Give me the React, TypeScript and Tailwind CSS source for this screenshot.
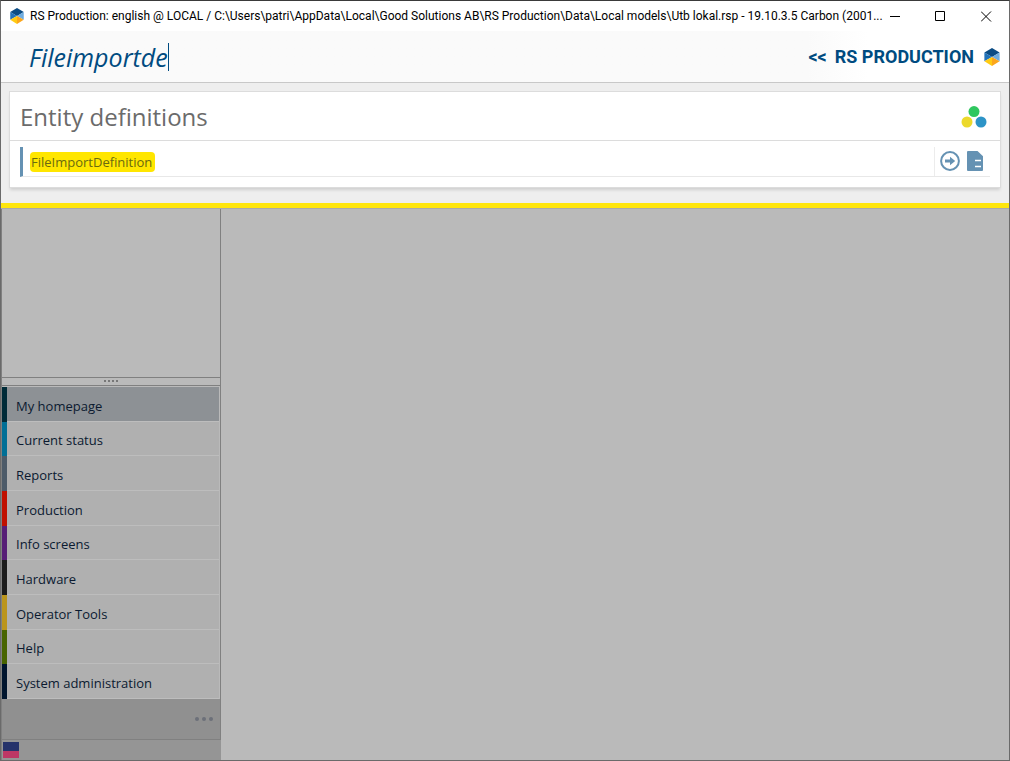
import React from "react";

type NavItem = { label: string; stripe: string; active?: boolean };

const navItems: NavItem[] = [
  { label: "My homepage", stripe: "bg-[#002b38]", active: true },
  { label: "Current status", stripe: "bg-[#006f96]" },
  { label: "Reports", stripe: "bg-[#4d5b69]" },
  { label: "Production", stripe: "bg-[#c01000]" },
  { label: "Info screens", stripe: "bg-[#571e76]" },
  { label: "Hardware", stripe: "bg-[#1b1b1b]" },
  { label: "Operator Tools", stripe: "bg-[#bb951c]" },
  { label: "Help", stripe: "bg-[#486400]" },
  { label: "System administration", stripe: "bg-[#00152e]" },
];

function CubeLogo({ className }: { className: string }) {
  return (
    <svg viewBox="0 0 16 18" className={className} aria-hidden="true">
      <path d="M8 0 15.6 4.5 8 9 .4 4.5Z" fill="#0b4c84" />
      <path d="M.4 4.5 8 9 .4 13.2Z" fill="#2272b9" />
      <path d="M15.6 4.5 8 9l7.6 4.2Z" fill="#6facde" />
      <path d="M.4 13.2 8 9v9Z" fill="#ffcb12" />
      <path d="M15.6 13.2 8 9v9Z" fill="#fba61c" />
    </svg>
  );
}

function TitleBar() {
  return (
    <header className="flex h-[30px] items-center bg-white pl-2">
      <CubeLogo className="h-4 w-4 shrink-0" />
      <h1 className="-mr-4 ml-[5px] min-w-0 flex-1 truncate font-['Roboto',sans-serif] text-[12px] leading-4 text-black">
        RS Production: english @ LOCAL / C:\Users\patri\AppData\Local\Good Solutions AB\RS
        Production\Data\Local models\Utb lokal.rsp - 19.10.3.5 Carbon (2001...
      </h1>
      <div className="flex h-full shrink-0">
        <button aria-label="Minimize" className="flex w-[45px] items-center justify-center">
          <svg viewBox="0 0 11 11" className="h-[11px] w-[11px]">
            <path d="M0 5.5h10" stroke="#000" />
          </svg>
        </button>
        <button aria-label="Maximize" className="flex w-[45px] items-center justify-center">
          <svg viewBox="0 0 11 11" className="h-[11px] w-[11px]">
            <path d="M.5.5h9v9h-9Z" stroke="#000" fill="none" />
          </svg>
        </button>
        <button aria-label="Close" className="flex w-[46px] items-center justify-center">
          <svg viewBox="0 0 11 11" className="h-[11px] w-[11px]">
            <path d="m0 .5 10 10m0-10-10 10" stroke="#000" />
          </svg>
        </button>
      </div>
    </header>
  );
}

function SearchBar() {
  return (
    <div className="flex h-[52px] items-center border-b border-[#c8c8c8] bg-linear-to-r from-[#fafafa] from-80% to-white to-86% pr-[9px] pl-7">
      <div className="flex min-w-0 flex-1 items-center">
        <input
          aria-label="Search"
          defaultValue="Fileimportde"
          className="field-sizing-content h-8 bg-transparent text-[25px] leading-8 text-[#004b80] italic outline-none"
        />
        <span className="h-7 w-px bg-[#004b80]" />
      </div>
      <a
        href="#"
        className="flex shrink-0 items-center pt-px font-['Roboto',sans-serif] text-[18px] leading-6 font-bold text-[#004b80]"
      >
        <span className="mr-2">&lt;&lt;</span>
        <span className="mr-[10px]">RS PRODUCTION</span>
        <CubeLogo className="h-[18px] w-4" />
      </a>
    </div>
  );
}

function ResultsCard() {
  return (
    <section className="border border-[#dcdcdc] bg-white shadow-[0_3px_3px_-1px_rgba(0,0,0,0.13)]">
      <div className="flex h-[49px] items-center justify-between border-b border-[#dcdcdc] pt-px pr-[13px] pl-[10px]">
        <h2 className="text-[24px] leading-8 text-[#6b6b6b]">Entity definitions</h2>
        <svg viewBox="0 0 26 22" className="h-[22px] w-[26px]" aria-hidden="true">
          <circle cx="13" cy="5.6" r="5.5" fill="#2fc75f" />
          <circle cx="6" cy="16" r="5.5" fill="#ecd92b" />
          <circle cx="20" cy="16" r="5.5" fill="#2d94c7" />
        </svg>
      </div>
      <div className="px-[10px] pt-[6px] pb-[10px]">
        <div className="flex h-[30px] items-center border-b border-l-3 border-b-[#e8e8e8] border-l-[#6592b3] pl-[7px]">
          <a
            href="#"
            className="rounded-[4px] bg-[#ffe600] pr-[3px] pl-px text-[13px] leading-5 text-[#6a6a10]"
          >
            FileImportDefinition
          </a>
          <div className="ml-auto flex h-full items-center gap-[7px] border-l border-[#ececec] pr-[7px] pb-px pl-[5px]">
            <button aria-label="Open">
              <svg viewBox="0 0 20 20" className="block h-5 w-5">
                <circle cx="10" cy="10" r="8.9" fill="none" stroke="#6592b3" strokeWidth="2" />
                <path d="M5 8.6h5V5.8l5.2 4.2-5.2 4.2v-2.8H5Z" fill="#6592b3" />
              </svg>
            </button>
            <button aria-label="Show document">
              <svg viewBox="0 0 16 20" className="block h-5 w-4">
                <path
                  d="M1 0h9.5L16 5.2V19a1 1 0 0 1-1 1H1a1 1 0 0 1-1-1V1a1 1 0 0 1 1-1Z"
                  fill="#6592b3"
                />
                <path d="M8 9.5h6M8 15.5h6" stroke="#fff" strokeWidth="1.3" />
              </svg>
            </button>
          </div>
        </div>
      </div>
    </section>
  );
}

function Sidebar() {
  return (
    <aside className="flex w-[220px] shrink-0 flex-col border-l border-[#808080] bg-[#bababa]">
      <div className="flex flex-1 flex-col border-r border-b border-[#808080]">
        <div className="flex-1" />
        <div className="flex h-[9px] items-center justify-center gap-[2px] border-y border-[#808080] pb-px">
          {[0, 1, 2, 3].map((i) => (
            <span key={i} className="h-[2px] w-[2px] bg-[#777]" />
          ))}
        </div>
        <nav className="grid h-[313px] grid-rows-9 pt-px pr-px">
          {navItems.map((item) => (
            <a
              key={item.label}
              href="#"
              className={`flex items-stretch text-[13px] text-[#0b1a30] ${
                item.active ? "bg-[#8d9195]" : "bg-[#b0b0b0]"
              }`}
            >
              <span className={`w-[5px] ${item.stripe}`} />
              <span className="flex flex-1 items-center border-b border-[#bdbdbd] pt-[5px] pl-[9px]">
                {item.label}
              </span>
            </a>
          ))}
        </nav>
        <div className="flex h-10 items-center justify-end bg-[#909090] pr-[7px]">
          <button aria-label="More" className="flex gap-[3px]">
            {[0, 1, 2].map((i) => (
              <span key={i} className="h-1 w-1 rounded-full bg-[#6c7079]" />
            ))}
          </button>
        </div>
      </div>
      <div className="flex h-5 items-center bg-[#959595] pl-px">
        <div className="h-4 w-4" role="img" aria-label="Language">
          <div className="h-[9px] bg-[#26336b]" />
          <div className="h-[7px] bg-[#bd3765]" />
        </div>
      </div>
    </aside>
  );
}

export default function App() {
  return (
    <div className="flex min-h-screen flex-col border border-t-[#3a3a3a] border-r-[#6a6a6a] border-b-[#6a6a6a] border-l-[#6a6a6a] font-['Open_Sans',sans-serif]">
      <TitleBar />
      <SearchBar />
      <div className="border-b-[5px] border-[#ffe60c] bg-[#eee] px-2 pt-2 pb-[15px]">
        <ResultsCard />
      </div>
      <main className="flex flex-1 border-t border-[#a9a9a9] bg-[#bababa]">
        <Sidebar />
      </main>
    </div>
  );
}
